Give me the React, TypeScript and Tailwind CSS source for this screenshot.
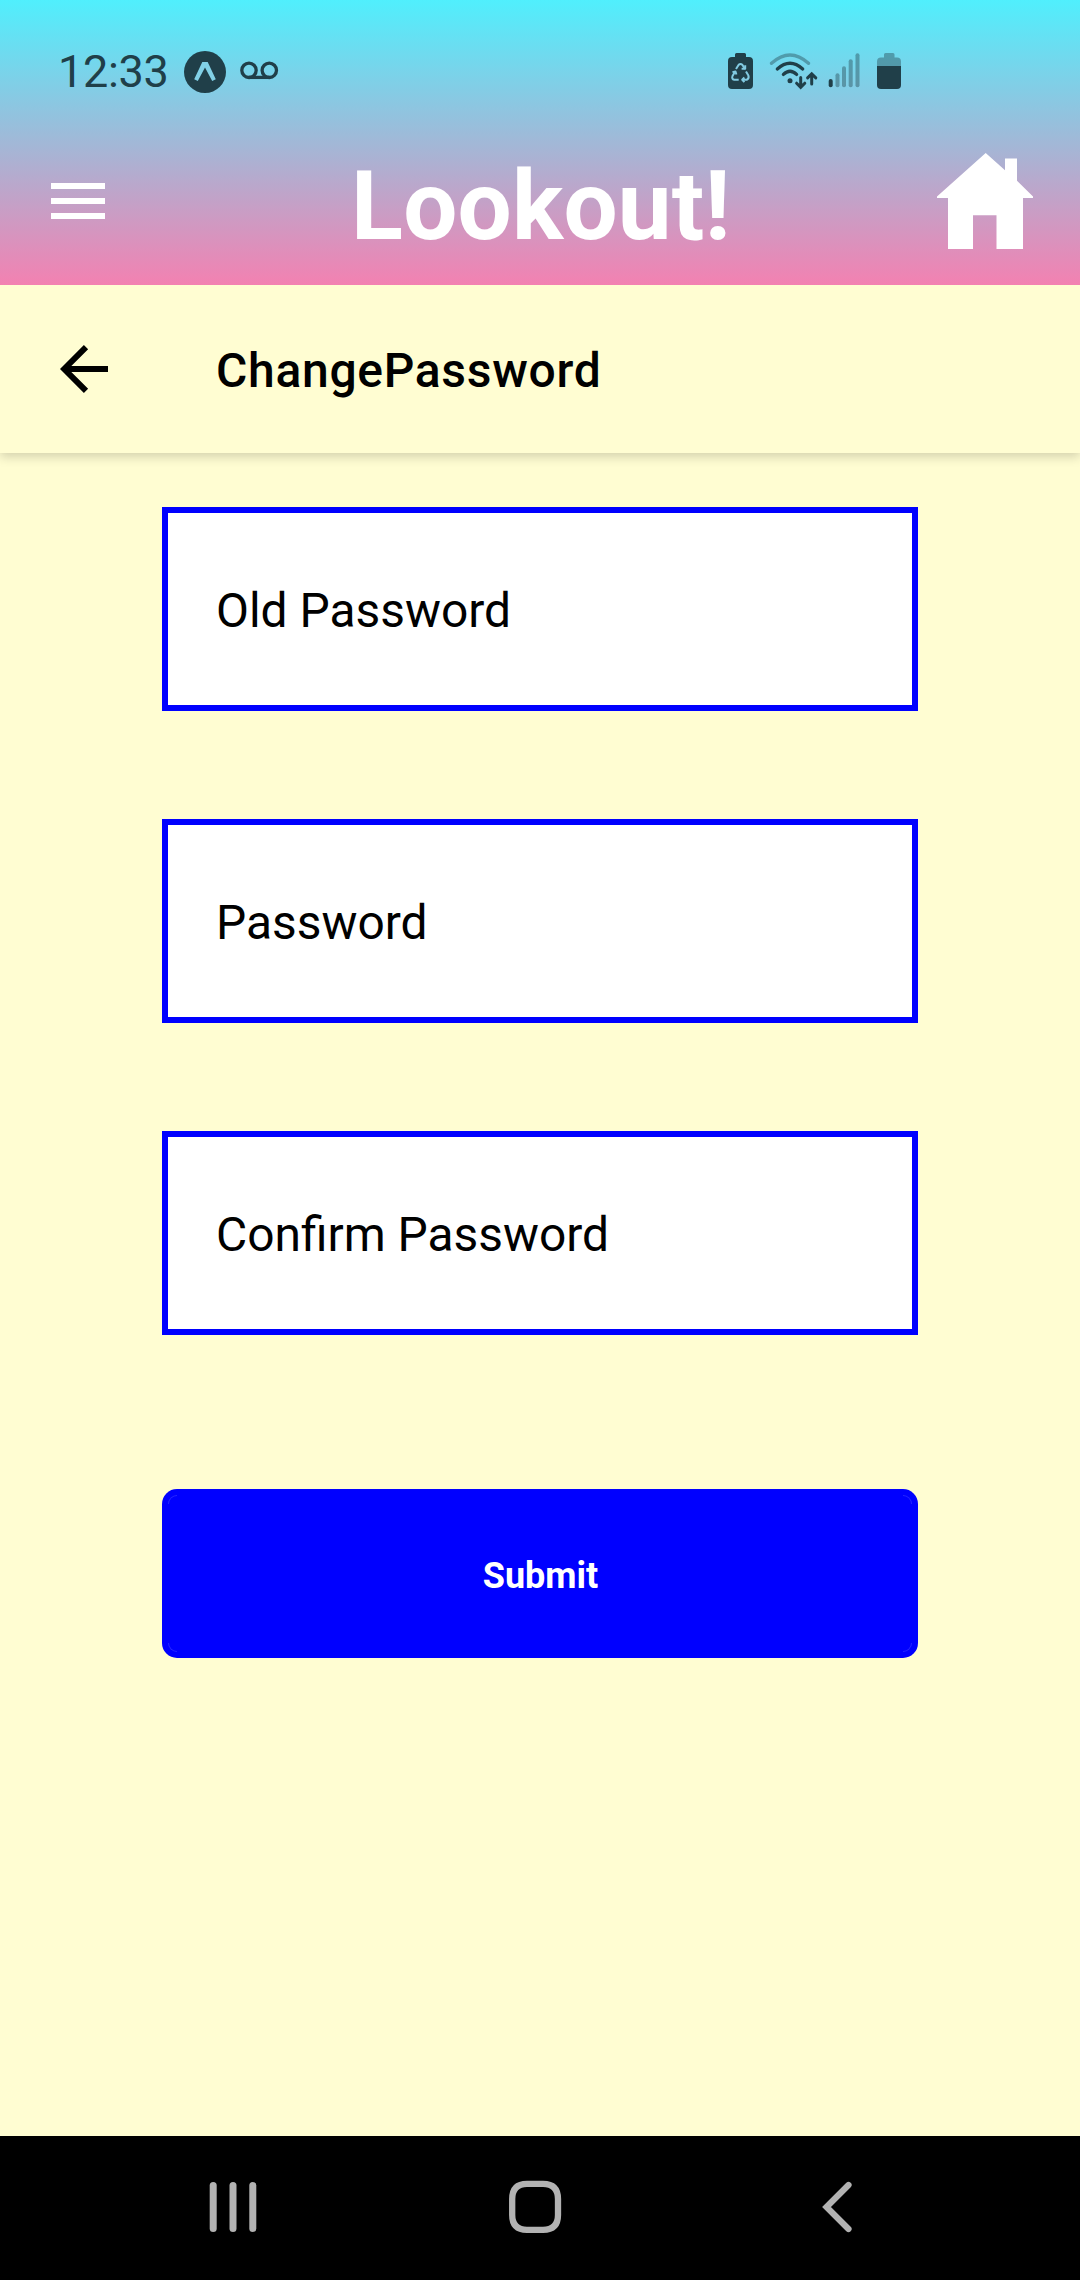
const INK = '#203f49';

function StatusLeftIcons() {
  return (
    <svg className="block" width="100" height="50" viewBox="182 47 100 50" fill="none">
      <circle cx="205" cy="72" r="21" fill={INK} />
      <path d="M202.3 62h5.4l8.1 17.2-3.6 1.8-7.2-13.600-7.200 13.600-3.600-1.800z" fill="#81d0e6" />
      <g stroke={INK} strokeWidth="3.300">
        <circle cx="249" cy="70.300" r="7.200" />
        <circle cx="269.300" cy="70.300" r="7.200" />
        <path d="M249 77.400h20.500" />
      </g>
    </svg>
  );
}

function StatusRightIcons() {
  return (
    <svg className="block" width="180" height="50" viewBox="724 47 180 50" fill="none">
      <path d="M736.500 53h8q1.500 0 1.500 1.500V57h3q4 0 4 4v24q0 4-4 4h-17q-4 0-4-4V61q0-4 4-4h3v-2.500q0-1.500 1.500-1.500z" fill={INK} />
      <g stroke="#82cbe2" strokeWidth="2" strokeLinejoin="round">
        <path d="M736 69l2.700-4.200q1.800-1.800 3.600 0l2.700 4.200" />
        <path d="M746 71.500l2.400 4q1 2.900-1.700 4.300h-4.500" />
        <path d="M738.700 79.800h-4.400q-2.900-.8-1.800-3.800l2.700-4.500" />
        <path d="M741.600 68.700h3.600v-3.400M744.400 77.500l-2.200 2.300 2.200 2.300M732.500 72.300l2.900-.9 1 3.100" />
      </g>
      <g strokeLinecap="round" strokeWidth="3.300">
        <path d="M771.500 63.300Q790 46.700 808.500 63.300" stroke={INK} strokeOpacity=".4" />
        <path d="M777.300 68.900Q790 57.500 802.700 68.900M783.400 74.400Q790 68 796.600 74.400" stroke={INK} />
        <path d="M800.700 77.500V87M796.600 83.200l4.100 4.100 4.100-4.100M811.700 84V74M807.600 77.900l4.100-4.100 4.100 4.100" stroke={INK} strokeWidth="3" />
      </g>
      <circle cx="790" cy="80.700" r="2.500" fill={INK} />
      <rect x="828.700" y="79" width="4" height="8.300" rx="2" fill={INK} />
      <g fill={INK} fillOpacity=".4">
        <rect x="835.500" y="73.300" width="4" height="14" rx="2" />
        <rect x="842" y="66.300" width="4" height="21" rx="2" />
        <rect x="848.700" y="59.300" width="4" height="28" rx="2" />
        <rect x="855.500" y="53.300" width="4" height="34" rx="2" />
        <path d="M885.500 53h7.500q1.500 0 1.500 1.500V57.500h2.500q4 0 4 4V66h-24v-4.500q0-4 4-4h3V54.500q0-1.500 1.500-1.500z" />
      </g>
      <path d="M877 66h24v19q0 4-4 4h-16q-4 0-4-4z" fill={INK} />
    </svg>
  );
}

function Banner() {
  return (
    <header className="h-[285px] bg-[linear-gradient(to_bottom,#50effd,#f381b1)]">
      <div className="flex h-[97px] items-end justify-between pr-[176px] pl-[58px] text-[#203f49]">
        <div className="flex items-center">
          <span className="w-[124px] text-[45px] leading-[50px] tracking-[-0.3px]">12:33</span>
          <StatusLeftIcons />
        </div>
        <StatusRightIcons />
      </div>
      <div className="grid h-[188px] grid-cols-[356px_1fr_143px]">
        <button aria-label="Menu" className="mt-[86px] ml-[51px] flex h-[36px] w-[54px] flex-col justify-between">
          <span className="h-[6px] w-full bg-white" />
          <span className="h-[6px] w-full bg-white" />
          <span className="h-[6px] w-full bg-white" />
        </button>
        <h1 className="mt-[53px] -ml-[5px] text-[96px] leading-[112px] font-bold tracking-[0.2px] whitespace-nowrap text-white">
          Lookout!
        </h1>
        <svg className="mt-[56px] block" width="96" height="96" viewBox="937 153 96 96" fill="#fff">
          <path d="M985.700 153L1005 170.300V158.500h12v22.300L1033 196.500V198h-10v51h-26.500V215.300h-23.500V249h-25V198h-11v-1.500z" />
        </svg>
      </div>
    </header>
  );
}

function Field({ label }: { label: string }) {
  return (
    <input
      type="text"
      placeholder={label}
      aria-label={label}
      className="block h-[204px] w-full border-[6px] border-[#0000ff] bg-white px-[48px] pt-[4px] text-[47.9px] text-black outline-none placeholder:text-black"
    />
  );
}

function NavigationBar() {
  return (
    <nav className="grid h-[144px] grid-cols-[299px_314px_1fr] items-start bg-black pt-[44px] pl-[209px]">
      <svg className="block" width="48" height="54" viewBox="209 2180 48 54" fill="#b2b2b2">
        <rect x="209.700" y="2182" width="7" height="50" rx="3.500" />
        <rect x="229.500" y="2182" width="7" height="50" rx="3.500" />
        <rect x="249.300" y="2182" width="7" height="50" rx="3.500" />
      </svg>
      <svg className="block" width="54" height="54" viewBox="508 2180 54 54" fill="none">
        <path d="M527 2183.800H543Q558 2183.800 558 2199V2215Q558 2229.800 543 2229.800H527Q512.200 2229.800 512.200 2215V2199Q512.200 2183.800 527 2183.800Z" stroke="#b2b2b2" strokeWidth="6.300" />
      </svg>
      <svg className="block" width="30" height="54" viewBox="822 2180 30 54" fill="none">
        <path d="M848.500 2185L826.500 2207 848.500 2229" stroke="#b2b2b2" strokeWidth="6.200" strokeLinecap="round" />
      </svg>
    </nav>
  );
}

export default function App() {
  return (
    <div className="flex h-[2280px] w-[1080px] flex-col bg-[#fffdd2] font-['Roboto',sans-serif]">
      <Banner />
      <div className="h-[168px] shadow-[0_4px_10px_0px_rgba(0,0,0,0.17)] [clip-path:inset(0_0_-20px_0)]">
        <div className="flex h-full items-center">
          <button aria-label="Back" className="ml-[60px] w-[156px]">
            <svg className="block" width="49" height="50" viewBox="60 344 49 50" fill="none">
              <path d="M108 369H65M86 347.200L64.200 369 86 390.800" stroke="#000" strokeWidth="6" />
            </svg>
          </button>
          <h2 className="pt-[3px] text-[48px] leading-[56px] font-medium tracking-[0.7px] text-black">
            ChangePassword
          </h2>
        </div>
      </div>
      <main className="flex flex-1 flex-col px-[162px] pt-[54px]">
        <form className="flex flex-col gap-[108px]">
          <Field label="Old Password" />
          <Field label="Password" />
          <Field label="Confirm Password" />
          <button
            type="button"
            className="relative mt-[46px] h-[169px] w-full rounded-[15px] bg-[#0000ff] pt-[4px] pl-[1px] text-[36px] font-bold text-white"
          >
            <span className="absolute top-[6px] left-[6px] size-[9px] rounded-tl-[9px] border-t border-l border-white/15" />
            <span className="absolute top-[6px] right-[6px] size-[9px] rounded-tr-[9px] border-t border-r border-white/15" />
            <span className="absolute bottom-[6px] left-[6px] size-[9px] rounded-bl-[9px] border-b border-l border-white/15" />
            <span className="absolute right-[6px] bottom-[6px] size-[9px] rounded-br-[9px] border-r border-b border-white/15" />
            Submit
          </button>
        </form>
      </main>
      <NavigationBar />
    </div>
  );
}
